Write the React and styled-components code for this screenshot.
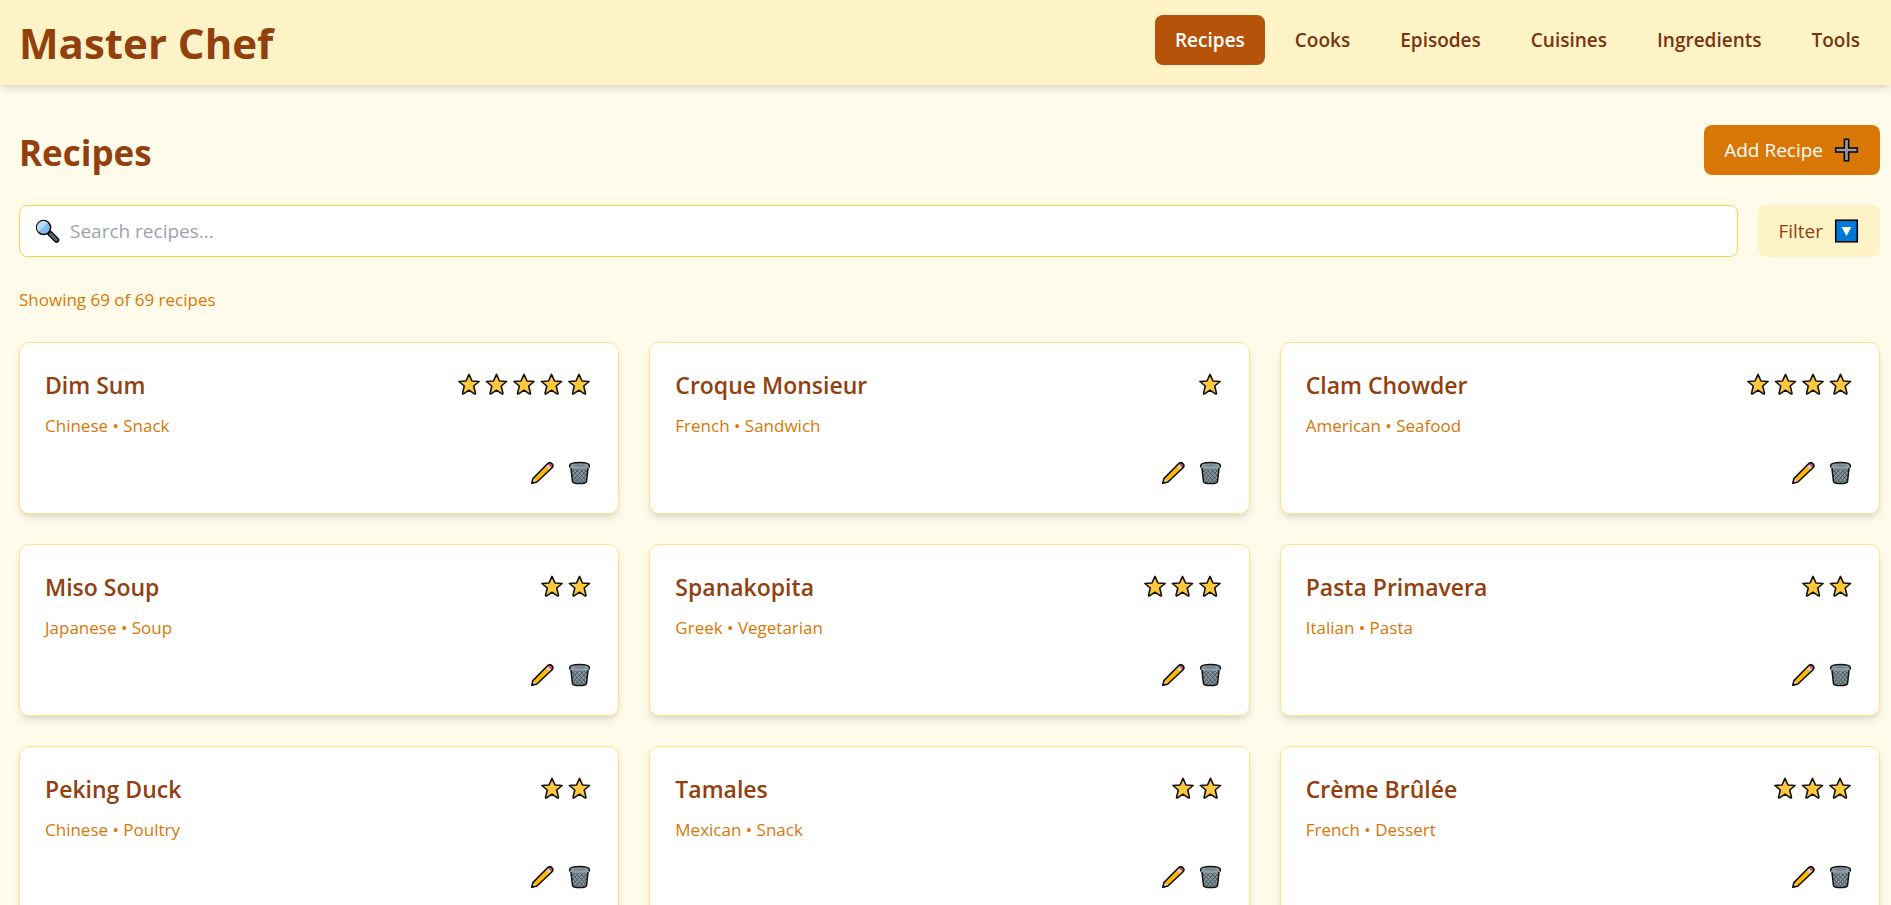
import React from "react";
import styled, { createGlobalStyle } from "styled-components";

const GlobalStyle = createGlobalStyle`
  *, *::before, *::after { box-sizing: border-box; }
  body {
    margin: 0;
    background: #fffbeb;
    color: #92400e;
    font-family: "Segoe UI", "Open Sans", "Noto Sans", sans-serif;
    font-size: 19px;
    line-height: 30px;
  }
  h1, h2, h3, p { margin: 0; }
  button, input { font: inherit; }
`;

const Header = styled.header`
  display: flex;
  align-items: flex-start;
  justify-content: space-between;
  padding: 15px 11px 15px 19px;
  background: #fef3c7;
  box-shadow: 0 5px 8px -1px rgba(0, 0, 0, 0.1), 0 3px 5px -3px rgba(0, 0, 0, 0.1);
`;

const Brand = styled.h1`
  font-size: 42px;
  font-weight: 700;
  line-height: 55px;
`;

const Nav = styled.nav`
  display: flex;
  gap: 10px;
`;

const NavLink = styled.a`
  padding: 10px 20px;
  border-radius: 8px;
  background: ${(p) => (p.$active ? "#b45309" : "transparent")};
  color: ${(p) => (p.$active ? "#fff" : "#78350f")};
  font-weight: 600;
  text-decoration: none;
`;

const Main = styled.main`
  padding: 40px 11px 40px 19px;
`;

const TitleRow = styled.div`
  display: flex;
  align-items: flex-start;
  justify-content: space-between;
  margin-bottom: 25px;
`;

const PageTitle = styled.h2`
  font-size: 35px;
  font-weight: 700;
  line-height: 55px;
`;

const Button = styled.button`
  display: flex;
  align-items: center;
  gap: 10px;
  padding: 10px 20px;
  border: 0;
  border-radius: 8px;
  background: ${(p) => (p.$primary ? "#d97706" : "#fef3c7")};
  color: ${(p) => (p.$primary ? "#fff" : "#92400e")};
  cursor: pointer;
`;

const SearchRow = styled.div`
  display: flex;
  gap: 20px;
  margin-bottom: 30px;
`;

const SearchBox = styled.label`
  flex: 1;
  display: flex;
  align-items: center;
  gap: 9px;
  padding: 10px 14px;
  border: 1px solid #fcd34d;
  border-radius: 8px;
  background: #fff;
`;

const SearchInput = styled.input`
  flex: 1;
  min-width: 0;
  height: 30px;
  padding: 0;
  border: 0;
  outline: 0;
  background: transparent;
  color: #92400e;
  &::placeholder { color: #9ca3af; opacity: 1; }
`;

const Count = styled.p`
  margin-bottom: 30px;
  color: #d97706;
  font-size: 17px;
  line-height: 25px;
`;

const Grid = styled.div`
  display: grid;
  grid-template-columns: repeat(3, minmax(0, 1fr));
  gap: 30px;
`;

const Card = styled.article`
  padding: 25px;
  border: 1px solid #fde68a;
  border-radius: 10px;
  background: #fff;
  box-shadow: 0 5px 8px -1px rgba(0, 0, 0, 0.1), 0 3px 5px -3px rgba(0, 0, 0, 0.1);
`;

const CardHead = styled.div`
  display: flex;
  align-items: flex-start;
  justify-content: space-between;
  margin-bottom: 10px;
`;

const CardTitle = styled.h3`
  font-size: 23px;
  font-weight: 600;
  line-height: 35px;
`;

const CardMeta = styled.p`
  margin-bottom: 20px;
  color: #d97706;
  font-size: 17px;
  line-height: 25px;
`;

const Actions = styled.div`
  display: flex;
  justify-content: flex-end;
  gap: 10px;
`;

const IconButton = styled.button`
  display: flex;
  align-items: center;
  height: 30px;
  padding: 0;
  border: 0;
  background: transparent;
  cursor: pointer;
`;

const Icon = styled.svg`
  display: block;
  flex: none;
  width: 27px;
  height: 24px;
`;

const Stars = styled.svg`
  display: block;
  flex: none;
  margin-top: 3px;
`;

const STAR_PITCH = 27.5;

function Rating({ value }) {
  const width = Math.round(value * STAR_PITCH);
  return (
    <Stars width={width} height="26" viewBox={`0 0 ${width} 26`} role="img" aria-label={`${value} out of 5 stars`}>
      {Array.from({ length: value }, (_, i) => (
        <path
          key={i}
          transform={`translate(${i * STAR_PITCH} 0)`}
          d="M14 3.4 17 10 24.1 10.5 18.7 15 20.5 22.4Q20.4 23.3 19.4 22.8L14 19.2 8.6 22.8Q7.6 23.3 7.5 22.4L9.3 15 3.9 10.5 11 10Z"
          fill="#ffc83d"
          stroke="#111"
          strokeWidth="1.6"
          strokeLinejoin="round"
        />
      ))}
    </Stars>
  );
}

const SearchIcon = () => (
  <Icon viewBox="0 0 27 24" aria-hidden="true">
    <path d="M16 14.5 22.5 21" stroke="#111" strokeWidth="5.6" strokeLinecap="round" />
    <path d="M16.6 15.1 22.3 20.8" stroke="#57646b" strokeWidth="3" strokeLinecap="round" />
    <circle cx="9.6" cy="8.6" r="7" fill="#7fbdf0" stroke="#111" strokeWidth="1.5" />
    <path d="M4.7 12.8A6.3 6.3 0 0 1 13.9 4.1Z" fill="#b5dcf8" />
  </Icon>
);

const PlusIcon = () => (
  <Icon viewBox="0 0 27 24" aria-hidden="true">
    <path d="M11.4 1.2H15.6V9.9H24.3V14.1H15.6V22.8H11.4V14.1H2.7V9.9H11.4Z" fill="#9b9b9b" stroke="#000" strokeWidth="1.5" />
  </Icon>
);

const FilterIcon = () => (
  <Icon viewBox="0 0 27 24" aria-hidden="true">
    <rect x="2.7" y="1.2" width="21.6" height="21.6" fill="#0078d7" stroke="#000" strokeWidth="1.5" />
    <path d="M8.7 8H18.3L13.5 17Z" fill="#fff" />
  </Icon>
);

const PencilIcon = () => (
  <Icon viewBox="0 0 27 24" aria-hidden="true">
    <path d="M2.8 22.3 3.9 17.6 18.5 2.8Q20.5.6 22.8 2.7T22.8 7L7.9 21Z" fill="#ffb900" />
    <path d="M2.8 22.3 3.9 17.6 7.9 21Z" fill="#f7d7c4" />
    <path d="M16.6 4.7 18.9 2.5 23.1 6.7 20.8 8.9Z" fill="#ccd6db" />
    <path d="M18.4 2.8Q20.6.8 22.8 2.8T22.6 6.9Z" fill="#e74856" />
    <path d="M2.8 22.3 3.9 17.6 18.5 2.8Q20.5.6 22.8 2.7T22.8 7L7.9 21Z" fill="none" stroke="#111" strokeWidth="1.6" strokeLinejoin="round" />
    <path d="M2.5 22.8 3.3 19.8 5.4 21.9Z" fill="#111" />
  </Icon>
);

const TrashIcon = () => (
  <Icon viewBox="0 0 27 24" aria-hidden="true">
    <path d="M4.9 6.6 6.5 20.5Q7 22.6 13.5 22.6T20.5 20.5L22.1 6.6Z" fill="#87959c" />
    <path
      d="M6 8.5 17.5 21.5M9.5 8 19.8 19M14 8 20.6 15M18 8 21.3 11.5M6.6 13.5 13.6 21.5M7 18 10 21.5M21 8.5 9.5 21.5M17.5 8 7.2 19M13 8 6.4 15M9 8 5.7 11.5M20.4 13.5 13.4 21.5M20 18 17 21.5"
      stroke="#47545b"
      strokeWidth=".9"
    />
    <path d="M4.9 6.6 6.5 20.5Q7 22.6 13.5 22.6T20.5 20.5L22.1 6.6" fill="none" stroke="#111" strokeWidth="1.5" />
    <path d="M3.7 4.4Q4 1.4 13.5 1.4T23.3 4.4Q23.3 7.8 13.5 7.8T3.7 4.4Z" fill="#8d9da5" />
    <path d="M3.7 6.1V4.4Q4 1.4 13.5 1.4T23.3 4.4V6.1" fill="none" stroke="#111" strokeWidth="1.5" strokeLinecap="round" />
    <path d="M6.5 4.4Q13.5 2.4 20.5 4.4Q13.5 6.6 6.5 4.4Z" fill="#70818a" />
  </Icon>
);

const sections = ["Recipes", "Cooks", "Episodes", "Cuisines", "Ingredients", "Tools"];

const recipes = [
  { name: "Dim Sum", cuisine: "Chinese", type: "Snack", level: 5 },
  { name: "Croque Monsieur", cuisine: "French", type: "Sandwich", level: 1 },
  { name: "Clam Chowder", cuisine: "American", type: "Seafood", level: 4 },
  { name: "Miso Soup", cuisine: "Japanese", type: "Soup", level: 2 },
  { name: "Spanakopita", cuisine: "Greek", type: "Vegetarian", level: 3 },
  { name: "Pasta Primavera", cuisine: "Italian", type: "Pasta", level: 2 },
  { name: "Peking Duck", cuisine: "Chinese", type: "Poultry", level: 2 },
  { name: "Tamales", cuisine: "Mexican", type: "Snack", level: 2 },
  { name: "Crème Brûlée", cuisine: "French", type: "Dessert", level: 3 },
];

function RecipeCard({ recipe }) {
  return (
    <Card>
      <CardHead>
        <CardTitle>{recipe.name}</CardTitle>
        <Rating value={recipe.level} />
      </CardHead>
      <CardMeta>{recipe.cuisine} • {recipe.type}</CardMeta>
      <Actions>
        <IconButton type="button" aria-label={`Edit ${recipe.name}`}><PencilIcon /></IconButton>
        <IconButton type="button" aria-label={`Delete ${recipe.name}`}><TrashIcon /></IconButton>
      </Actions>
    </Card>
  );
}

export default function App() {
  return (
    <>
      <GlobalStyle />
      <Header>
        <Brand>Master Chef</Brand>
        <Nav>
          {sections.map((name, i) => (
            <NavLink key={name} href={`#${name.toLowerCase()}`} $active={i === 0} aria-current={i === 0 ? "page" : undefined}>
              {name}
            </NavLink>
          ))}
        </Nav>
      </Header>
      <Main>
        <TitleRow>
          <PageTitle>Recipes</PageTitle>
          <Button type="button" $primary>Add Recipe <PlusIcon /></Button>
        </TitleRow>
        <SearchRow>
          <SearchBox>
            <SearchIcon />
            <SearchInput type="text" placeholder="Search recipes..." aria-label="Search recipes" />
          </SearchBox>
          <Button type="button">Filter <FilterIcon /></Button>
        </SearchRow>
        <Count>Showing 69 of 69 recipes</Count>
        <Grid>
          {recipes.map((recipe) => <RecipeCard key={recipe.name} recipe={recipe} />)}
        </Grid>
      </Main>
    </>
  );
}
